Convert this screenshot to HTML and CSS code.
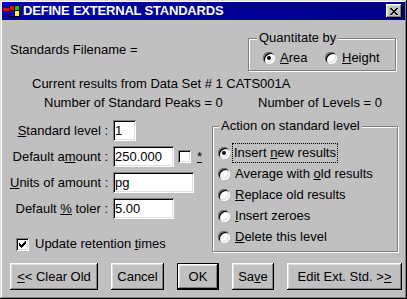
FILE: index.html
```html
<!DOCTYPE html>
<html lang="en">
<head>
    <meta charset="UTF-8">
    <title>Define External Standards</title>
    <link rel="stylesheet" href="styles.css">
</head>
<body>
    <div class="window">
        <!-- Title bar -->
        <div class="titlebar">
            <svg class="app-icon" width="17" height="12" viewBox="0 0 17 12">
                <rect x="0" y="3" width="6" height="3" fill="#f00"/>
                <rect x="1" y="6" width="5" height="3" fill="#00f"/>
                <rect x="6" y="0" width="11" height="12" fill="#000"/>
                <rect x="7" y="1" width="4" height="4" fill="#f00"/>
                <rect x="12" y="1" width="4" height="4" fill="#0c0"/>
                <rect x="7" y="6" width="4" height="5" fill="#00f"/>
                <rect x="12" y="6" width="4" height="5" fill="#ff0"/>
            </svg>
            <span class="title">DEFINE EXTERNAL STANDARDS</span>
            <button class="close-btn">
                <svg width="8" height="7" viewBox="0 0 8 7">
                    <path d="M0 0h2v1h1v1h2v-1h1v-1h2v1h-1v1h-1v1h-1v1h1v1h1v1h1v1h-2v-1h-1v-1h-2v1h-1v1h-2v-1h1v-1h1v-1h1v-1h-1v-1h-1z" fill="#000"/>
                </svg>
            </button>
        </div>

        <!-- Filename and quantitation -->
        <div class="top">
            <div class="filename">Standards Filename =</div>
            <div class="group quant">
                <span class="group-title">Quantitate by</span>
                <label class="option first"><span class="radio checked"></span><span><u>A</u>rea</span></label>
                <label class="option"><span class="radio"></span><span><u>H</u>eight</span></label>
            </div>
        </div>

        <div class="info">
            <div class="info-line">Current results from Data Set # 1 CATS001A</div>
            <div class="info-counts">
                <span>Number of Standard Peaks = 0</span>
                <span>Number of Levels = 0</span>
            </div>
        </div>

        <div class="main">
            <div class="fields">
                <div class="field-grid">
                    <label class="field-label"><u>S</u>tandard level :</label>
                    <div class="field-row"><input class="edit w-level" value="1"></div>

                    <label class="field-label">Default a<u>m</u>ount :</label>
                    <div class="field-row">
                        <input class="edit w-amount" value="250.000">
                        <span class="checkbox box-star"></span>
                        <span class="star"><u>*</u></span>
                    </div>

                    <label class="field-label"><u>U</u>nits of amount :</label>
                    <div class="field-row"><input class="edit w-units" value="pg"></div>

                    <label class="field-label">Default <u>%</u> toler :</label>
                    <div class="field-row"><input class="edit w-amount" value="5.00"></div>
                </div>

                <label class="check-row">
                    <span class="checkbox">
                        <svg width="7" height="7" viewBox="0 0 7 7">
                            <path d="M6 0h1v3h-1v1h-1v1h-1v1h-1v1h-1v-1h-1v-1h-1v-3h1v1h1v1h1v-1h1v-1h1z" fill="#000"/>
                        </svg>
                    </span>
                    <span>Update retention <u>t</u>imes</span>
                </label>
            </div>

            <div class="group action">
                <span class="group-title">Action on standard level</span>
                <label class="option-row"><span class="radio checked"></span><span class="focus">Insert <u>n</u>ew results</span></label>
                <label class="option-row"><span class="radio"></span><span>Average with <u>o</u>ld results</span></label>
                <label class="option-row"><span class="radio"></span><span><u>R</u>eplace old results</span></label>
                <label class="option-row"><span class="radio"></span><span><u>I</u>nsert zeroes</span></label>
                <label class="option-row"><span class="radio"></span><span><u>D</u>elete this level</span></label>
            </div>
        </div>

        <!-- Dialog buttons -->
        <div class="buttons">
            <button class="btn w-clear"><u>&lt;</u>&lt; Clear Old</button>
            <button class="btn w-cancel">Cancel</button>
            <button class="btn btn-default w-small">OK</button>
            <button class="btn w-small">Sa<u>v</u>e</button>
            <button class="btn w-edit">Edit Ext. Std. &gt;<u>&gt;</u></button>
        </div>
    </div>
</body>
</html>
```

FILE: styles.css
```css
body {
    margin: 0;
    background: #c0c0c0;
    font-family: "Liberation Sans", Arial, sans-serif;
    font-size: 13px;
    line-height: 16px;
    color: #000;
}

.window {
    width: 407px;
    height: 299px;
    box-sizing: border-box;
    padding: 2px;
    background: #c0c0c0;
    box-shadow: inset -1px -1px #000, inset 1px 1px #dfdfdf,
                inset -2px -2px #808080, inset 2px 2px #fff;
}

.titlebar {
    display: flex;
    align-items: center;
    height: 18px;
    padding-left: 1px;
    background: linear-gradient(to right, #0000b0, #000088);
    color: #fff;
}

.app-icon {
    margin-right: 3px;
}

.title {
    font-weight: bold;
    font-size: 13px;
    letter-spacing: -0.2px;
}

.close-btn {
    display: flex;
    align-items: center;
    justify-content: center;
    width: 16px;
    height: 14px;
    margin-left: auto;
    margin-right: 3px;
    padding: 0 1px 0 0;
    border: none;
    background: #c0c0c0;
    box-shadow: inset -1px -1px #000, inset 1px 1px #fff,
                inset -2px -2px #808080, inset 2px 2px #dfdfdf;
}

/* Group boxes */
.group {
    position: relative;
    box-sizing: border-box;
    border: 1px solid #808080;
    box-shadow: inset 1px 1px #fff, 1px 1px #fff;
}

.group-title {
    position: absolute;
    top: -9px;
    left: 8px;
    padding: 0 2px;
    background: #c0c0c0;
    white-space: nowrap;
}

.top {
    display: flex;
    align-items: flex-start;
    margin: 18px 9px 0 8px;
}

.filename {
    margin-top: 4px;
}

.quant {
    display: flex;
    align-items: center;
    width: 148px;
    height: 33px;
    margin-left: auto;
    padding: 7px 0 0 14px;
}

.option {
    display: flex;
    align-items: center;
    gap: 5px;
}

.option.first {
    width: 62px;
}

/* Radio buttons and check boxes */
.radio {
    position: relative;
    flex: none;
    width: 12px;
    height: 12px;
    border-radius: 50%;
    background: #fff;
    box-shadow: inset 1px 1px #808080, inset -1px -1px #fff,
                inset 2px 2px #000, inset -2px -2px #dfdfdf;
}

.radio.checked::after {
    content: "";
    position: absolute;
    left: 4px;
    top: 4px;
    width: 4px;
    height: 4px;
    border-radius: 50%;
    background: #000;
}

.checkbox {
    display: flex;
    align-items: center;
    justify-content: center;
    flex: none;
    width: 13px;
    height: 13px;
    background: #fff;
    box-shadow: inset 1px 1px #808080, inset -1px -1px #fff,
                inset 2px 2px #000, inset -2px -2px #dfdfdf;
}

.info {
    margin-top: 5px;
}

.info-line {
    margin-left: 30px;
}

.info-counts {
    display: grid;
    grid-template-columns: 214px auto;
    margin: 3px 0 0 42px;
}

.main {
    display: flex;
    align-items: flex-start;
    margin-top: 9px;
}

.fields {
    width: 202px;
    margin-left: 8px;
}

.field-grid {
    display: grid;
    grid-template-columns: 98px max-content;
    grid-auto-rows: 21px;
    column-gap: 5px;
    row-gap: 5px;
    align-items: center;
}

.field-label {
    text-align: right;
    white-space: nowrap;
}

.field-row {
    display: flex;
    align-items: center;
}

.edit {
    box-sizing: border-box;
    height: 21px;
    padding: 0 2px;
    border: none;
    outline: none;
    background: #fff;
    font: inherit;
    color: #000;
    box-shadow: inset 1px 1px #808080, inset -1px -1px #fff,
                inset 2px 2px #000, inset -2px -2px #dfdfdf;
}

.w-level { width: 23px; }
.w-amount { width: 61px; }
.w-units { width: 81px; }

.box-star {
    margin-left: 4px;
}

.star {
    margin-left: 6px;
}

.check-row {
    display: flex;
    align-items: center;
    gap: 6px;
    margin: 17px 0 0 6px;
}

.action {
    width: 186px;
    height: 126px;
    margin-top: 6px;
    padding: 15px 0 0 5px;
}

.action .group-title {
    left: 6px;
}

.option-row {
    display: flex;
    align-items: center;
    gap: 5px;
    height: 21px;
}

.focus {
    padding: 1px 1px;
    margin-left: -2px;
    outline: 1px dotted #000;
}

/* Buttons */
.buttons {
    display: flex;
    gap: 13px;
    margin: 11px 0 0 8px;
}

.btn {
    box-sizing: border-box;
    height: 27px;
    padding: 0;
    border: none;
    background: #c0c0c0;
    font: inherit;
    color: #000;
    box-shadow: inset -1px -1px #000, inset 1px 1px #fff,
                inset -2px -2px #808080, inset 2px 2px #dfdfdf;
}

.btn-default {
    border: 1px solid #000;
}

.w-clear { width: 88px; }
.w-cancel { width: 53px; }
.w-small { width: 42px; }
.w-edit { width: 115px; }
```
